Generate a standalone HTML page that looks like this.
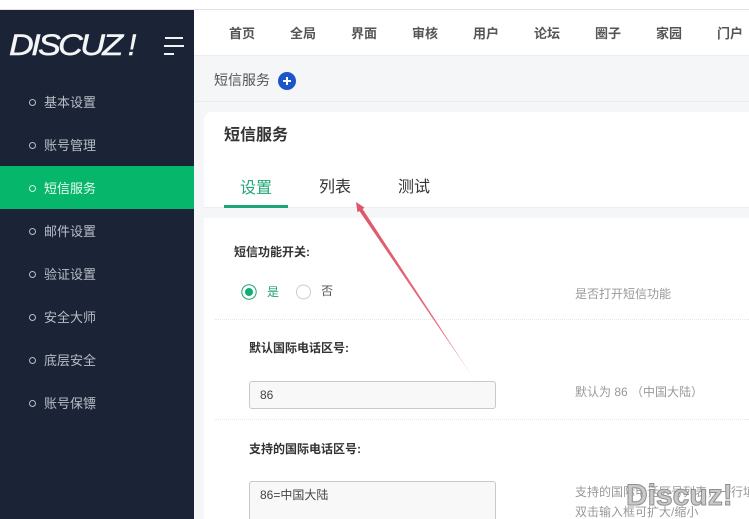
<!DOCTYPE html>
<html>
<head>
<meta charset="utf-8">
<style>
html,body{margin:0;padding:0;width:749px;height:519px;overflow:hidden;}
body{position:relative;background:#f5f6f7;font-family:"Liberation Sans","Noto Sans CJK SC",sans-serif;}
.a{position:absolute;white-space:nowrap;line-height:1;}
.side{position:absolute;left:0;top:10px;width:194px;height:509px;background:#1a2436;}
.item{position:absolute;left:0;width:194px;height:43px;color:#b9bdc6;font-size:13px;line-height:45px;}
.item span{position:absolute;left:44px;top:0;}
.item i{position:absolute;left:29px;top:19px;width:5px;height:5px;border:1.3px solid #b9bdc6;border-radius:50%;}
.item.on{background:#06b76b;color:#e9fbf2;}
.item.on i{border-color:#d5f5e5;}
.nav{position:absolute;top:27px;font-size:13px;line-height:14px;color:#555;font-weight:bold;white-space:nowrap;}
.dot{position:absolute;left:215px;width:534px;height:0;border-top:1px dotted #e6e6e6;}
</style>
</head>
<body>
<div class="a" style="left:0;top:0;width:749px;height:9px;background:#fff;"></div>
<div class="a" style="left:0;top:9px;width:749px;height:1px;background:#e2e2e2;"></div>
<div class="a" style="left:194px;top:10px;width:555px;height:45px;background:#fff;border-bottom:1px solid #ececec;"></div>
<div class="a" style="left:194px;top:101px;width:555px;height:1px;background:#ebebeb;"></div>

<div class="side"></div>
<div class="a" style="left:9px;top:31px;color:#f4f5f6;font:italic 30px/30px 'Liberation Sans',sans-serif;letter-spacing:-2.3px;-webkit-text-stroke:0.5px #f4f5f6;transform-origin:0 50%;transform:scaleX(1.14);">DISCUZ</div>
<div class="a" style="left:128px;top:31px;color:#f4f5f6;font:italic 30px/30px 'Liberation Sans',sans-serif;-webkit-text-stroke:0.5px #f4f5f6;">!</div>
<div class="a" style="left:165px;top:37px;width:18px;height:1.5px;background:#f2f3f4;"></div>
<div class="a" style="left:164px;top:45px;width:20px;height:1.5px;background:#f2f3f4;"></div>
<div class="a" style="left:164px;top:53px;width:10px;height:1.5px;background:#f2f3f4;"></div>

<div class="item" style="top:80px;"><i></i><span>基本设置</span></div>
<div class="item" style="top:123px;"><i></i><span>账号管理</span></div>
<div class="item on" style="top:166px;"><i></i><span>短信服务</span></div>
<div class="item" style="top:209px;"><i></i><span>邮件设置</span></div>
<div class="item" style="top:252px;"><i></i><span>验证设置</span></div>
<div class="item" style="top:295px;"><i></i><span>安全大师</span></div>
<div class="item" style="top:338px;"><i></i><span>底层安全</span></div>
<div class="item" style="top:381px;"><i></i><span>账号保镖</span></div>

<div class="nav" style="left:229px;">首页</div>
<div class="nav" style="left:290px;">全局</div>
<div class="nav" style="left:351px;">界面</div>
<div class="nav" style="left:412px;">审核</div>
<div class="nav" style="left:473px;">用户</div>
<div class="nav" style="left:534px;">论坛</div>
<div class="nav" style="left:595px;">圈子</div>
<div class="nav" style="left:656px;">家园</div>
<div class="nav" style="left:717px;">门户</div>

<div class="a" style="left:214px;top:73px;font-size:14px;color:#555;">短信服务</div>
<svg style="position:absolute;left:278px;top:72px;" width="18" height="18" viewBox="0 0 18 18"><circle cx="9" cy="9" r="9" fill="#1a56c8"/><path d="M9 5v8M5 9h8" stroke="#fff" stroke-width="2"/></svg>

<div class="a" style="left:204px;top:112px;width:545px;height:96px;background:#fff;border-top-left-radius:8px;border-bottom:1px solid #eee;box-sizing:border-box;"></div>
<div class="a" style="left:224px;top:128px;font-size:16px;font-weight:bold;color:#333;">短信服务</div>
<div class="a" style="left:240px;top:181px;font-size:16px;color:#22a878;">设置</div>
<div class="a" style="left:319px;top:180px;font-size:16px;color:#333;">列表</div>
<div class="a" style="left:398px;top:180px;font-size:16px;color:#333;">测试</div>
<div class="a" style="left:224px;top:205px;width:64px;height:3px;background:#1fa573;"></div>

<div class="a" style="left:204px;top:218px;width:545px;height:301px;background:#fff;"></div>
<div class="a" style="left:234px;top:246px;font-size:12px;font-weight:bold;color:#333;">短信功能开关:</div>

<svg style="position:absolute;left:240px;top:283px;" width="18" height="18" viewBox="0 0 18 18"><circle cx="9" cy="9" r="7.2" fill="#fff" stroke="#1fa573" stroke-width="1"/><circle cx="9" cy="9" r="4" fill="#12ad73"/></svg>
<div class="a" style="left:267px;top:286px;font-size:12px;color:#1fa573;">是</div>
<svg style="position:absolute;left:295px;top:283px;" width="18" height="18" viewBox="0 0 18 18"><circle cx="8.5" cy="9" r="7" fill="#fff" stroke="#ccc" stroke-width="1"/></svg>
<div class="a" style="left:321px;top:285px;font-size:12px;color:#555;">否</div>
<div class="a" style="left:575px;top:288px;font-size:12px;color:#999;">是否打开短信功能</div>

<div class="dot" style="top:319px;"></div>
<div class="a" style="left:249px;top:342px;font-size:12px;font-weight:bold;color:#333;">默认国际电话区号:</div>
<div class="a" style="left:249px;top:381px;width:247px;height:28px;box-sizing:border-box;background:#f8f8f8;border:1px solid #c9c9c9;border-radius:3px;"></div>
<div class="a" style="left:260px;top:389px;font-size:12px;color:#444;">86</div>
<div class="a" style="left:575px;top:386px;font-size:12px;color:#999;">默认为 86 （中国大陆）</div>

<div class="dot" style="top:419px;"></div>
<div class="a" style="left:249px;top:443px;font-size:12px;font-weight:bold;color:#333;">支持的国际电话区号:</div>
<div class="a" style="left:249px;top:481px;width:247px;height:38px;box-sizing:border-box;background:#f8f8f8;border:1px solid #c9c9c9;border-bottom:0;border-radius:3px 3px 0 0;"></div>
<div class="a" style="left:260px;top:489px;font-size:12px;color:#444;">86=中国大陆</div>
<div class="a" style="left:575px;top:486px;font-size:12px;color:#999;">支持的国际电话区号列表，一行填一个</div>
<div class="a" style="left:575px;top:506px;font-size:12px;height:13px;overflow:hidden;color:#999;">双击输入框可扩大/缩小</div>

<div class="a" style="left:626px;top:480px;font-size:30px;line-height:32px;font-weight:bold;color:#c9c9c9;-webkit-text-stroke:1px #8f8f8f;">Discuz!</div>

<svg style="position:absolute;left:0;top:0;pointer-events:none;" width="749" height="519" viewBox="0 0 749 519">
<defs><linearGradient id="g" x1="356" y1="203" x2="474" y2="379" gradientUnits="userSpaceOnUse"><stop offset="0" stop-color="#df5468"/><stop offset="0.7" stop-color="#e2707f"/><stop offset="1" stop-color="#f3d0d5"/></linearGradient></defs>
<path d="M356 202L364.5 207.6 L362.6 209 L474 379 L359.4 211 L357.5 212.4Z" fill="url(#g)"/>
</svg>
</body>
</html>
